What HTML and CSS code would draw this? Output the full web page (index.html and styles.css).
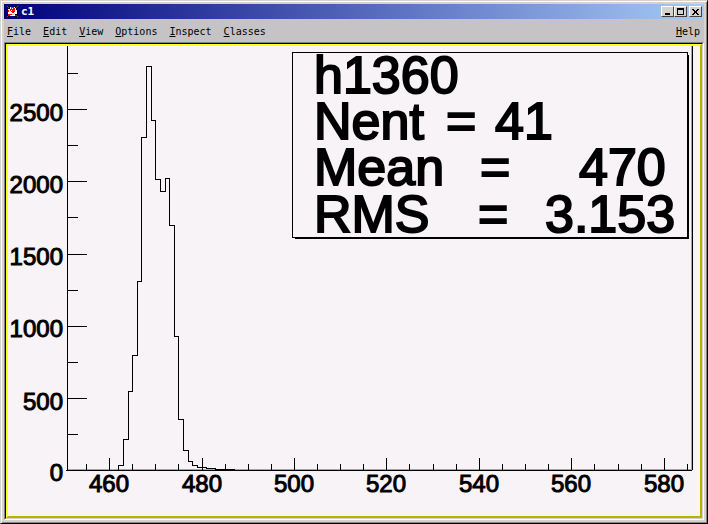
FILE: index.html
```html
<!DOCTYPE html>
<html lang="en">
<head>
    <meta charset="UTF-8">
    <meta name="viewport" content="width=device-width, initial-scale=1.0">
    <title>c1</title>
    <link rel="stylesheet" href="styles.css">
</head>
<body>
    <div class="window">
        <header class="titlebar">
            <svg class="logo" viewBox="0 0 11 11" width="11" height="11">
                <path d="M0 0h3v1h5V0h3v3h-1v5h1v3H8v-1H3v1H0V8h1V3H0z" fill="#000"/>
                <path d="M3 1h5v1h1v1h1v5H9v1H8v1H3V9H2V8H1V3h1V2h1z" fill="#fff"/>
                <path d="M0 0h1v1H0zM1 1h1v1H1zM9 1h1v1H9zM10 0h1v1h-1zM4 1h3v1h1v4H7v1H5V6H4V5H3V3h1zM0 10h1v1H0zM1 8h2v2H1zM8 9h2v1H8zM10 10h1v1h-1zM3 8h2v1H3zM1 4h1v2H1z" fill="#f00"/>
                <path d="M5 2h1v1H5zM4 4h1v1H4z" fill="#fff"/>
                <path d="M7 7h1v1H7zM5 8h2v1H5z" fill="#c6c3c6"/>
                <path d="M9 3h1v1H9zM8 8h1v1H8zM2 2h1v1H2z" fill="#000"/>
            </svg>
            <h1>c1</h1>
            <div class="controls">
                <button type="button" aria-label="Minimize">
                    <svg viewBox="0 0 11 9" width="11" height="9"><path d="M3 6h5v2H3z"/></svg>
                </button>
                <button type="button" aria-label="Maximize">
                    <svg viewBox="0 0 11 9" width="11" height="9"><path fill-rule="evenodd" d="M2 1h7v7H2zM3 3v4h5V3z"/></svg>
                </button>
                <button type="button" class="close" aria-label="Close">
                    <svg viewBox="0 0 11 9" width="11" height="9"><path d="M2 2h2v1h1v1h1V3h1V2h2v1H8v1H7v2h1v1h1v1H7V7H6V6H5v1H4v1H2V7h1V6h1V4H3V3H2z"/></svg>
                </button>
            </div>
        </header>

        <nav class="menubar">
            <button type="button"><u>F</u>ile</button>
            <button type="button"><u>E</u>dit</button>
            <button type="button"><u>V</u>iew</button>
            <button type="button"><u>O</u>ptions</button>
            <button type="button"><u>I</u>nspect</button>
            <button type="button"><u>C</u>lasses</button>
            <button type="button" class="help"><u>H</u>elp</button>
        </nav>

        <main class="canvas">
            <div class="pad">
                <svg class="plot" viewBox="8 46 692 470" role="img" aria-label="Histogram h1360">
                    <!-- frame shade -->
                    <path class="shade" d="M68 469H691V46H692V470H68z"/>

                    <!-- axes -->
                    <path class="line" d="M67 46V470M66 470H692M692 46V470"/>

                    <!-- y ticks -->
                    <path class="line" d="M67 109H87M67 181H87M67 254H87M67 326H87M67 398H87"/>
                    <path class="line" d="M67 73H78M67 145H78M67 217H78M67 290H78M67 362H78M67 434H78"/>

                    <!-- x ticks -->
                    <path class="line" d="M109 458V470M202 458V470M294 458V470M386 458V470M479 458V470M571 458V470M664 458V470"/>
                    <path class="line" d="M86 464V470M132 464V470M155 464V470M178 464V470M225 464V470M248 464V470M271 464V470M317 464V470M340 464V470M363 464V470M409 464V470M433 464V470M456 464V470M502 464V470M525 464V470M548 464V470M594 464V470M618 464V470M641 464V470M687 464V470"/>

                    <!-- histogram -->
                    <path class="line" d="M67 470H118V465H123V439H128V391H132V355H137V281H141V137H146V66H151V120H155V179H160V191H165V178H169V225H174V336H178V419H183V450H188V461H192V465H197V467H206V468H215V469H234V470"/>

                    <g class="label y">
                        <text x="63" y="121">2500</text>
                        <text x="63" y="193">2000</text>
                        <text x="63" y="265">1500</text>
                        <text x="63" y="337">1000</text>
                        <text x="63" y="410">500</text>
                        <text x="63" y="481">0</text>
                    </g>
                    <g class="label x">
                        <text x="109" y="492">460</text>
                        <text x="202" y="492">480</text>
                        <text x="294" y="492">500</text>
                        <text x="386" y="492">520</text>
                        <text x="479" y="492">540</text>
                        <text x="571" y="492">560</text>
                        <text x="664" y="492">580</text>
                    </g>

                    <!-- stats box -->
                    <path d="M295 55H689V239H295z"/>
                    <path d="M292 52H688V238H292z"/>
                    <path class="paper" d="M293 53H687V237H293z"/>
                    <g class="stats">
                        <text x="314" y="93">h1360</text>
                        <text x="314" y="139">Nent</text>
                        <text x="446" y="139">=</text>
                        <text x="495" y="139">41</text>
                        <text x="314" y="185">Mean</text>
                        <text x="480" y="185">=</text>
                        <text x="579" y="185">470</text>
                        <text x="314" y="232">RMS</text>
                        <text x="478" y="232">=</text>
                        <text x="545" y="232">3.153</text>
                    </g>
                </svg>
            </div>
        </main>
    </div>
</body>
</html>
```
FILE: styles.css
```css
* {
    box-sizing: border-box;
}

body {
    margin: 0;
    height: 100vh;
    background-color: #c6c3c6;
    color: #000;
    overflow: hidden;
}

button {
    margin: 0;
    padding: 0;
    border: none;
    background: none;
    color: inherit;
    font: inherit;
}

/* Window frame */
.window {
    display: flex;
    flex-direction: column;
    height: 100%;
    padding: 2px;
    border: 1px solid;
    border-color: #d6d3ce #000 #000 #d6d3ce;
    background-color: #d6d3ce;
    box-shadow: inset 1px 1px #fff, inset -1px -1px #848284;
}

/* Title bar */
.titlebar {
    display: flex;
    align-items: center;
    flex: none;
    height: 15px;
    margin: 1px 1px 0;
    padding: 0 2px 0 3px;
    background: linear-gradient(to right, #00007b, #a5cbf7);
}

.logo {
    margin-right: 3px;
}

.titlebar h1 {
    margin: 0;
    color: #fff;
    font: bold 11px/15px "DejaVu Sans Mono", monospace;
}

.controls {
    display: flex;
    margin-left: auto;
}

.controls button {
    display: flex;
    width: 13px;
    height: 11px;
    border: 1px solid;
    border-color: #fff #424142 #424142 #fff;
    background-color: #d6d3ce;
}

.controls .close {
    margin-left: 2px;
}

/* Menu */
.menubar {
    display: flex;
    flex: none;
    gap: 12px;
    height: 23px;
    margin: 0 1px;
    padding: 3px 4px 0 3px;
    background-color: #c6c3c6;
    font: 10px/20px "DejaVu Sans Mono", monospace;
}

.menubar .help {
    margin-left: auto;
}

.menubar u {
    text-underline-offset: 1px;
}

/* Canvas */
.canvas {
    flex: 1;
    min-height: 0;
    margin: 0 1px 1px;
    border: 1px solid;
    border-color: #848284 #fff #fff #848284;
}

.pad {
    height: 100%;
    border: 1px solid;
    border-color: #000 #d6d3ce #d6d3ce #000;
}

.plot {
    display: block;
    width: 100%;
    height: 100%;
    border: 2px solid;
    border-color: #ffff21 #b5b200 #b5b200 #ffff21;
    background-color: #f7f3f7;
}

svg path {
    shape-rendering: crispEdges;
}

.line {
    fill: none;
    stroke: #000;
    stroke-width: 1px;
}

.shade {
    fill: #a5a6ad;
}

.paper {
    fill: #f7f3f7;
}

.label {
    font: 24px "Liberation Sans", Arial, sans-serif;
    stroke: #000;
    stroke-width: 1px;
}

.label.y {
    text-anchor: end;
}

.label.x {
    text-anchor: middle;
}

.stats {
    font: 52px "Liberation Sans", Arial, sans-serif;
    stroke: #000;
    stroke-width: 2px;
}
```
